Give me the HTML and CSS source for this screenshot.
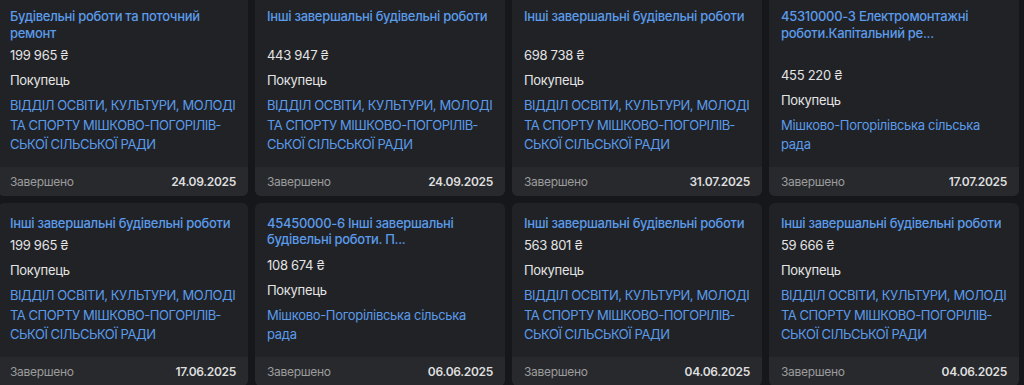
FILE: index.html
```html
<!DOCTYPE html>
<html lang="uk">
<head>
    <meta charset="UTF-8">
    <meta name="viewport" content="width=device-width, initial-scale=1.0">
    <title>Закупівлі</title>
    <link rel="stylesheet" href="styles.css">
</head>
<body>
    <div class="tender-grid">
        <div class="tender-card">
            <div class="card-body">
                <a class="tender-title" href="#">Будівельні роботи та поточний ремонт</a>
                <div class="tender-details">
                    <div class="tender-price">199 965 ₴</div>
                    <div class="tender-label">Покупець</div>
                    <a class="tender-buyer upper" href="#">ВІДДІЛ ОСВІТИ, КУЛЬТУРИ, МОЛОДІ ТА СПОРТУ МІШКОВО-ПОГОРІЛІВ&shy;СЬКОЇ СІЛЬСЬКОЇ РАДИ</a>
                </div>
            </div>
            <div class="card-footer">
                <span class="status">Завершено</span>
                <span class="date">24.09.2025</span>
            </div>
        </div>
        <div class="tender-card">
            <div class="card-body">
                <a class="tender-title" href="#">Інші завершальні будівельні роботи</a>
                <div class="tender-details">
                    <div class="tender-price">443 947 ₴</div>
                    <div class="tender-label">Покупець</div>
                    <a class="tender-buyer upper" href="#">ВІДДІЛ ОСВІТИ, КУЛЬТУРИ, МОЛОДІ ТА СПОРТУ МІШКОВО-ПОГОРІЛІВ&shy;СЬКОЇ СІЛЬСЬКОЇ РАДИ</a>
                </div>
            </div>
            <div class="card-footer">
                <span class="status">Завершено</span>
                <span class="date">24.09.2025</span>
            </div>
        </div>
        <div class="tender-card">
            <div class="card-body">
                <a class="tender-title" href="#">Інші завершальні будівельні роботи</a>
                <div class="tender-details">
                    <div class="tender-price">698 738 ₴</div>
                    <div class="tender-label">Покупець</div>
                    <a class="tender-buyer upper" href="#">ВІДДІЛ ОСВІТИ, КУЛЬТУРИ, МОЛОДІ ТА СПОРТУ МІШКОВО-ПОГОРІЛІВ&shy;СЬКОЇ СІЛЬСЬКОЇ РАДИ</a>
                </div>
            </div>
            <div class="card-footer">
                <span class="status">Завершено</span>
                <span class="date">31.07.2025</span>
            </div>
        </div>
        <div class="tender-card">
            <div class="card-body">
                <a class="tender-title" href="#">45310000-3 Електромонтажні роботи.Капітальний ре...</a>
                <div class="tender-details">
                    <div class="tender-price">455 220 ₴</div>
                    <div class="tender-label">Покупець</div>
                    <a class="tender-buyer" href="#">Мішково-Погорілівська сільська рада</a>
                </div>
            </div>
            <div class="card-footer">
                <span class="status">Завершено</span>
                <span class="date">17.07.2025</span>
            </div>
        </div>

        <div class="tender-card">
            <div class="card-body">
                <a class="tender-title" href="#">Інші завершальні будівельні роботи</a>
                <div class="tender-details">
                    <div class="tender-price">199 965 ₴</div>
                    <div class="tender-label">Покупець</div>
                    <a class="tender-buyer upper" href="#">ВІДДІЛ ОСВІТИ, КУЛЬТУРИ, МОЛОДІ ТА СПОРТУ МІШКОВО-ПОГОРІЛІВ&shy;СЬКОЇ СІЛЬСЬКОЇ РАДИ</a>
                </div>
            </div>
            <div class="card-footer">
                <span class="status">Завершено</span>
                <span class="date">17.06.2025</span>
            </div>
        </div>
        <div class="tender-card">
            <div class="card-body">
                <a class="tender-title" href="#">45450000-6 Інші завершальні будівельні роботи. П...</a>
                <div class="tender-details">
                    <div class="tender-price">108 674 ₴</div>
                    <div class="tender-label">Покупець</div>
                    <a class="tender-buyer" href="#">Мішково-Погорілівська сільська рада</a>
                </div>
            </div>
            <div class="card-footer">
                <span class="status">Завершено</span>
                <span class="date">06.06.2025</span>
            </div>
        </div>
        <div class="tender-card">
            <div class="card-body">
                <a class="tender-title" href="#">Інші завершальні будівельні роботи</a>
                <div class="tender-details">
                    <div class="tender-price">563 801 ₴</div>
                    <div class="tender-label">Покупець</div>
                    <a class="tender-buyer upper" href="#">ВІДДІЛ ОСВІТИ, КУЛЬТУРИ, МОЛОДІ ТА СПОРТУ МІШКОВО-ПОГОРІЛІВ&shy;СЬКОЇ СІЛЬСЬКОЇ РАДИ</a>
                </div>
            </div>
            <div class="card-footer">
                <span class="status">Завершено</span>
                <span class="date">04.06.2025</span>
            </div>
        </div>
        <div class="tender-card">
            <div class="card-body">
                <a class="tender-title" href="#">Інші завершальні будівельні роботи</a>
                <div class="tender-details">
                    <div class="tender-price">59 666 ₴</div>
                    <div class="tender-label">Покупець</div>
                    <a class="tender-buyer upper" href="#">ВІДДІЛ ОСВІТИ, КУЛЬТУРИ, МОЛОДІ ТА СПОРТУ МІШКОВО-ПОГОРІЛІВ&shy;СЬКОЇ СІЛЬСЬКОЇ РАДИ</a>
                </div>
            </div>
            <div class="card-footer">
                <span class="status">Завершено</span>
                <span class="date">04.06.2025</span>
            </div>
        </div>
    </div>
</body>
</html>
```

FILE: styles.css
```css
* {
    margin: 0;
    padding: 0;
    box-sizing: border-box;
}

body {
    background-color: #16171a;
    font-family: Inter, "Noto Sans", sans-serif;
    color: #e4e4e4;
    letter-spacing: -0.3px;
    overflow: hidden;
}

a {
    text-decoration: none;
}

.tender-grid {
    display: grid;
    grid-template-columns: repeat(4, 250px);
    gap: 7px;
    margin: -4px 0 0 -2px; /* page is scrolled a bit, first column cut */
}

.tender-card {
    display: flex;
    flex-direction: column;
    background-color: #202226;
    border-radius: 6px;
    overflow: hidden;
}

.card-body {
    flex: 1;
    display: flex;
    flex-direction: column;
    padding: 12px 10px 12px 12px;
}

.tender-title {
    font-size: 13px;
    line-height: 16.5px;
    font-weight: 500;
    color: #5b9bea;
}

.tender-details {
    margin-top: auto;
    padding-top: 4px;
}

.tender-price,
.tender-label {
    font-size: 13px;
    line-height: 20px;
    color: #e4e4e4;
}

.tender-label {
    margin-top: 5px;
}

.tender-buyer {
    display: block;
    margin-top: 6px;
    font-size: 13px;
    line-height: 19.5px;
    color: #5b9bea;
}

.tender-buyer.upper {
    letter-spacing: -0.45px;
}

.card-footer {
    display: flex;
    justify-content: space-between;
    padding: 7px 12px;
    background-color: #27292d;
    font-size: 12px;
    line-height: 15px;
}

.status {
    color: #9c9c9c;
}

.date {
    color: #dedede;
    font-weight: 600;
}
```
